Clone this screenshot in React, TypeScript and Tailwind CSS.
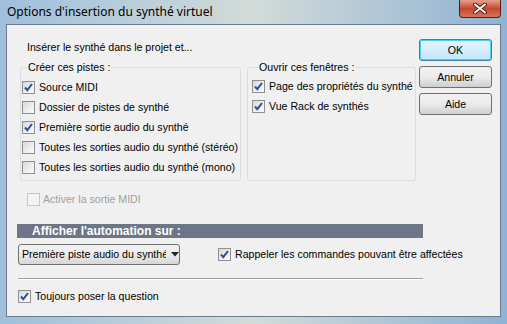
import React from 'react';

const Box = ({ checked = false, disabled = false }: { checked?: boolean; disabled?: boolean }) => (
  <span
    className={
      'w-[13px] h-[13px] shrink-0 border flex items-center justify-center ' +
      (disabled
        ? 'border-[#c6c6c6] bg-[#f4f4f4]'
        : 'border-[#8e8f8f] bg-gradient-to-br from-[#d8d8d8] via-[#ececec] to-[#fbfbfb]')
    }
  >
    {checked && (
      <svg width="11" height="11" viewBox="0 0 11 11">
        <path d="M2 5.5 L4.3 8.2 L9 2" fill="none" stroke="#2c4f9e" strokeWidth="2" />
      </svg>
    )}
  </span>
);

const Check = ({ label, checked = false, disabled = false, gap = 'gap-[4px]' }: { label: string; checked?: boolean; disabled?: boolean; gap?: string }) => (
  <div className={'h-[20px] flex items-center ' + gap}>
    <Box checked={checked} disabled={disabled} />
    <span className={'whitespace-nowrap ' + (disabled ? 'text-[#a0a0a0]' : 'text-black')}>{label}</span>
  </div>
);

const Button = ({ label, focused = false }: { label: string; focused?: boolean }) => (
  <div
    className={
      'w-[73px] h-[22px] rounded-[3px] border flex items-center justify-center text-black ' +
      (focused
        ? 'border-[#3c7fb1] bg-gradient-to-b from-[#eaf6fd] to-[#bee6fd] shadow-[inset_0_0_0_1px_#48d0f8]'
        : 'border-[#707070] bg-gradient-to-b from-[#f2f2f2] via-[#ebebeb] to-[#cfcfcf]')
    }
  >
    {label}
  </div>
);

export default function App() {
  return (
    <div
      className="w-[507px] h-[324px] flex flex-col bg-gradient-to-r from-[#9fbfdb] via-[#d2dbd8] to-[#8fb2d3] pl-[6px] pr-[6px] pb-[7px] text-[10.6px] leading-[13px]"
      style={{ fontFamily: '"Liberation Sans", Arial, sans-serif' }}
    >
      {/* Title bar */}
      <div className="h-[24px] flex items-start justify-between">
        <span className="pl-[1px] pt-[5px] text-[12px] leading-[14px] text-black" style={{ fontFamily: '"Noto Sans", sans-serif' }}>
          Options d'insertion du synthé virtuel
        </span>
        <div className="w-[42px] h-[18px] rounded-b-[4px] border border-[#5a1d12] border-t-0 bg-gradient-to-b from-[#e4a090] via-[#c7472d] to-[#d8745a] flex items-center justify-center">
          <svg width="14" height="11" viewBox="0 0 14 11">
            <path d="M2 1.5 L12 9.5 M12 1.5 L2 9.5" stroke="#5b1b10" strokeWidth="4" strokeLinecap="round" />
            <path d="M2 1.5 L12 9.5 M12 1.5 L2 9.5" stroke="#ffffff" strokeWidth="2" strokeLinecap="round" />
          </svg>
        </div>
      </div>

      {/* Client area */}
      <div className="flex-1 bg-[#f0f0f0] border border-[#6b7b8c] flex pl-[10px]">
        <div className="w-[406px] flex flex-col pt-[16px]">
          <div className="pl-[10px]">Insérer le synthé dans le projet et...</div>

          <div className="mt-[7px] ml-[3px] flex gap-[6px] items-stretch">
            <fieldset className="w-[221px] min-w-0 border border-[#d5dfe5] rounded-[3px] pl-[1px] pt-[3px] pb-[3px]">
              <legend className="ml-[5px] px-[1px]">Créer ces pistes :</legend>
              <Check label="Source MIDI" checked />
              <Check label="Dossier de pistes de synthé" />
              <Check label="Première sortie audio du synthé" checked />
              <Check label="Toutes les sorties audio du synthé (stéréo)" />
              <Check label="Toutes les sorties audio du synthé (mono)" />
            </fieldset>
            <fieldset className="w-[169px] min-w-0 border border-[#d5dfe5] rounded-[3px] pl-[4px] pt-[2px] pb-[3px]">
              <legend className="ml-[6px] px-[1px]">Ouvrir ces fenêtres :</legend>
              <Check label="Page des propriétés du synthé" checked />
              <Check label="Vue Rack de synthés" checked />
            </fieldset>
          </div>

          <div className="mt-[8px] pl-[10px]">
            <Check label="Activer la sortie MIDI" disabled gap="gap-[3px]" />
          </div>

          <div className="mt-[15px] h-[14px] bg-[#6c7686] flex items-center pl-[15px] text-white font-bold text-[12px]">
            Afficher l'automation sur :
          </div>

          <div className="mt-[6px] flex items-center">
            <div className="ml-[1px] w-[164px] h-[21px] rounded-[3px] border border-[#707070] bg-gradient-to-b from-[#f2f2f2] via-[#ebebeb] to-[#d6d6d6] flex items-center pl-[3px]">
              <span className="w-[144px] overflow-hidden whitespace-nowrap text-black">Première piste audio du synthé</span>
              <svg width="8" height="5" viewBox="0 0 8 5" className="ml-[5px]">
                <path d="M0 0 L8 0 L4 4.5 Z" fill="#222" />
              </svg>
            </div>
            <div className="ml-[38px]">
              <Check label="Rappeler les commandes pouvant être affectées" checked />
            </div>
          </div>

          <div className="mt-[13px] ml-[1px] h-[2px] border-t border-[#a0a0a0] border-b border-b-white" />

          <div className="mt-[6px] ml-[1px]">
            <Check label="Toujours poser la question" checked />
          </div>
        </div>

        <div className="-ml-[4px] pt-[14px] flex flex-col gap-[5px]">
          <Button label="OK" focused />
          <Button label="Annuler" />
          <Button label="Aide" />
        </div>
      </div>
    </div>
  );
}
